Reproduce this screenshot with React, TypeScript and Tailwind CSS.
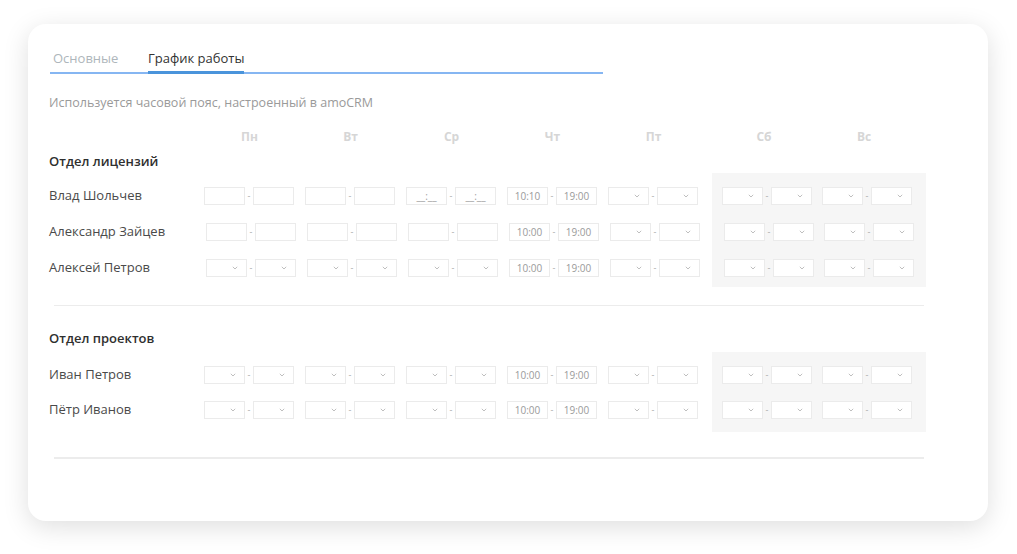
import React from "react";

type Kind = "empty" | "ph" | "sel" | "time";
type Cell = { kind: Kind; a?: string; b?: string };

const E: Cell = { kind: "empty" };
const P: Cell = { kind: "ph" };
const S: Cell = { kind: "sel" };
const T = (a: string, b: string): Cell => ({ kind: "time", a, b });

const Chevron = () => (
  <svg width="6" height="4" viewBox="0 0 6 4" className="absolute right-[8px] top-[6px]">
    <polyline points="0.8,0.8 3,3 5.2,0.8" fill="none" stroke="#b8b8b8" strokeWidth="0.9" />
  </svg>
);

function Box({ kind, text }: { kind: Kind; text?: string }) {
  return (
    <div className="relative w-[41px] h-[18px] bg-white border-[1.5px] border-[#ebebeb] flex items-center justify-center text-[10px] text-[#9a9a9a] leading-none">
      {kind === "time" && <span>{text}</span>}
      {kind === "ph" && <span className="text-[#a0a0a0] whitespace-pre">__:__</span>}
      {kind === "sel" && <Chevron />}
    </div>
  );
}

function Pair({ cell }: { cell: Cell }) {
  return (
    <div className="flex items-center">
      <Box kind={cell.kind} text={cell.a} />
      <div className="w-[8px] flex justify-center text-[9px] text-[#aaaaaa] leading-none">-</div>
      <Box kind={cell.kind} text={cell.b} />
    </div>
  );
}

type Row = { name: string; days: Cell[]; shift?: boolean };

function Section({ title, rows, rowH, blockPt, blockPb, gap }: { title: string; rows: Row[]; rowH: string; blockPt: string; blockPb: string; gap: string }) {
  return (
    <div>
      <div className="text-[13px] font-semibold text-[#2f2f2f] leading-[18px]">{title}</div>
      <div className={`flex ${gap}`}>
        <div className={`w-[663px] ${blockPt} ${blockPb}`}>
          {rows.map((r) => (
            <div key={r.name} className={`flex items-center ${rowH}`}>
              <div className="w-[155px] text-[13px] text-[#4a4a4a] whitespace-nowrap">{r.name}</div>
              {r.days.slice(0, 5).map((c, i) => (
                <div key={i} className={`w-[101px] ${r.shift ? "pl-[2px]" : ""}`}>
                  <Pair cell={c} />
                </div>
              ))}
            </div>
          ))}
        </div>
        <div className={`bg-[#f6f6f6] pl-[10px] pr-[4px] ${blockPt} ${blockPb}`}>
          {rows.map((r) => (
            <div key={r.name} className={`flex items-center ${rowH}`}>
              {r.days.slice(5).map((c, i) => (
                <div key={i} className={`w-[100px] ${r.shift ? "pl-[2px]" : ""}`}>
                  <Pair cell={c} />
                </div>
              ))}
            </div>
          ))}
        </div>
      </div>
    </div>
  );
}

export default function App() {
  const days = ["Пн", "Вт", "Ср", "Чт", "Пт"];
  const sec1: Row[] = [
    { name: "Влад Шольчев", days: [E, E, P, T("10:10", "19:00"), S, S, S] },
    { name: "Александр Зайцев", days: [E, E, E, T("10:00", "19:00"), S, S, S], shift: true },
    { name: "Алексей Петров", days: [S, S, S, T("10:00", "19:00"), S, S, S], shift: true },
  ];
  const sec2: Row[] = [
    { name: "Иван Петров", days: [S, S, S, T("10:00", "19:00"), S, S, S] },
    { name: "Пётр Иванов", days: [S, S, S, T("10:00", "19:00"), S, S, S] },
  ];
  return (
    <div className="w-[1017px] h-[554px] bg-white pt-[24px] pl-[28px]" style={{ fontFamily: '"Open Sans", "Noto Sans", sans-serif' }}>
      <div className="w-[960px] h-[497px] bg-white rounded-[18px] shadow-[0_6px_26px_rgba(0,0,0,0.13)] pl-[21px] pt-[25px]">
        {/* Tabs */}
        <div className="w-[553px] ml-[1px]">
          <div className="flex text-[13px] leading-[18px] whitespace-nowrap">
            <div className="w-[98px] pl-[3px] pb-[6px] text-[#aeb6bb]">Основные</div>
            <div className="relative z-10 pb-[4px] -mb-[1px] border-b-[3px] border-[#4a94db] text-[#333333]">График работы</div>
          </div>
          <div className="h-[1.5px] -mt-[1px] bg-[#86b6f2]" />
        </div>
        <div className="mt-[20px] text-[12.5px] leading-[18px] text-[#9a9a9a]">Используется часовой пояс, настроенный в amoCRM</div>
        {/* Day headers */}
        <div className="mt-[16px] flex text-[12px] font-bold text-[#d6d6d6] leading-[18px]">
          <div className="w-[155px]" />
          {days.map((d) => (
            <div key={d} className="w-[101px] pr-[10px] text-center">{d}</div>
          ))}
          <div className="w-[3px]" />
          <div className="pl-[7px] flex">
            <div className="w-[100px] pr-[10px] text-center">Сб</div>
            <div className="w-[100px] pr-[10px] text-center">Вс</div>
          </div>
        </div>
        <div className="mt-[6px]">
          <Section title="Отдел лицензий" rows={sec1} rowH="h-[36px]" blockPt="pt-[5px]" blockPb="pb-[1px]" gap="mt-[3px]" />
        </div>
        <div className="ml-[5px] w-[870px] h-[1.5px] bg-[#ececec] mt-[18px]" />
        <div className="mt-[23px]">
          <Section title="Отдел проектов" rows={sec2} rowH="h-[35px]" blockPt="pt-[5px]" blockPb="pb-[5px]" gap="mt-[5px]" />
        </div>
        <div className="ml-[5px] w-[870px] h-[1.5px] bg-[#ececec] mt-[25px]" />
      </div>
    </div>
  );
}
